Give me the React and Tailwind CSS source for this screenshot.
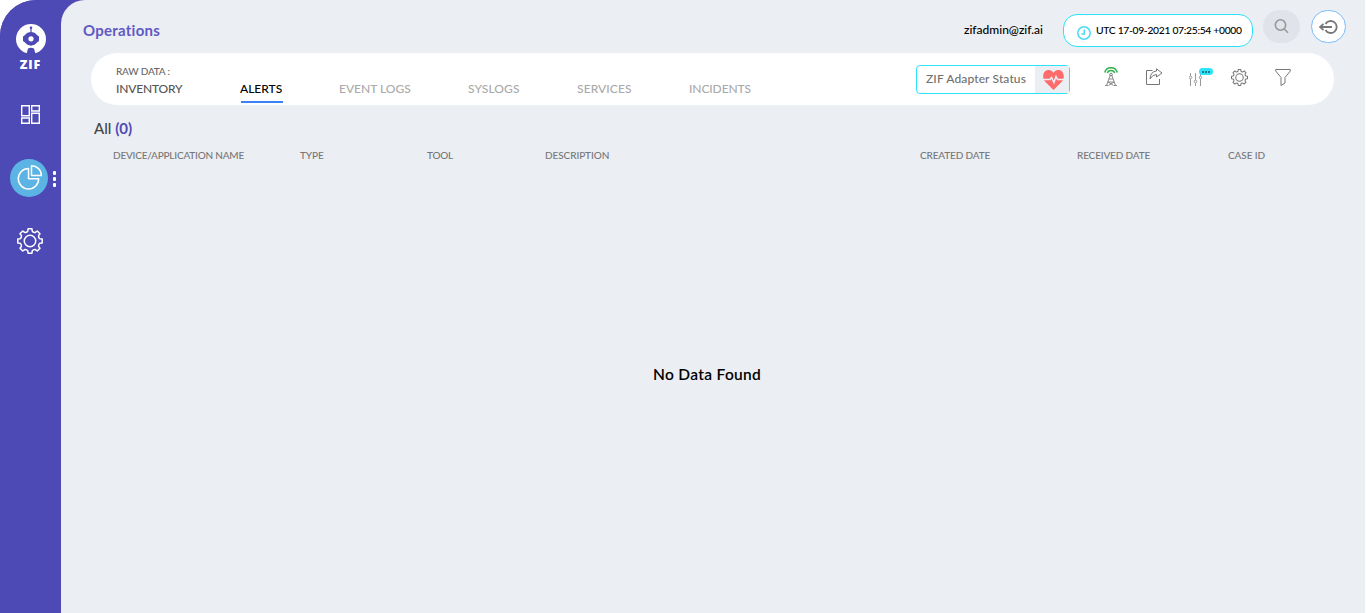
const C = ({ children, className = "", ...p }) => (
  <svg fill="none" stroke="currentColor" className={`block shrink-0 ${className}`} {...p}>{children}</svg>
);

// Eight-toothed outline: each tooth is a flat crown joined to the next by a shallow curved notch.
const polar = (r, deg) => {
  const a = (deg * Math.PI) / 180;
  return `${(12 + r * Math.sin(a)).toFixed(2)} ${(12 - r * Math.cos(a)).toFixed(2)}`;
};
const gear = Array.from({ length: 8 }, (_, i) => {
  const d = i * 45;
  return `${i ? "L" : "M"}${polar(9.3, d - 13)}L${polar(11.4, d - 9)}L${polar(11.4, d + 9)}L${polar(9.3, d + 13)}Q${polar(8.3, d + 22.5)} ${polar(9.3, d + 32)}`;
}).join("") + "z";

const Gear = (p) => (
  <C viewBox="0 0 24 24" strokeLinejoin="round" {...p}>
    <path d={gear} />
    <circle cx="12" cy="12" r="5.300" />
  </C>
);

function Sidebar() {
  return (
    <aside className="flex h-full w-[61px] shrink-0 flex-col items-center bg-[#4e4ab5] pr-[2px] text-white">
      <C className="mt-6 ml-[2px] h-[30px] w-[30px]" viewBox="0 0 30 30" stroke="none">
        <circle cx="15" cy="15" r="15" fill="#fff" />
        <path d="M10.500 30l1.500-5.500q3-1.500 6 0l1.500 5.500z" fill="#4e4ab5" />
        <path d="M9 11a7.500 7.500 0 0 1 12 0l2 1.500v4.500l-2 1.500a7.500 7.500 0 0 1-12 0l-2-1.500v-4.500z" fill="#4e4ab5" />
        <path d="M15 4v4M15 19v2.500" stroke="#4e4ab5" strokeWidth="1.200" />
        <circle cx="15" cy="3.800" r="1.300" fill="#4e4ab5" />
        <circle cx="15" cy="14.800" r="2.600" fill="#fff" />
      </C>
      <span className="mt-1 ml-[2px] font-['Open_Sans',sans-serif] text-[12.500px] leading-[14px] font-extrabold tracking-[1px]">ZIF</span>
      <C className="mt-[33px] ml-[2px] h-[19px] w-[19px]" viewBox="0 0 19 19" strokeWidth="1.400">
        <path d="M.7.7h7.600v10H.7zM10.700.7h7.600v5.300h-7.600zM.7 13h7.600v5.300H.7zM10.700 8.300h7.600v10h-7.600z" />
      </C>
      <div className="relative mt-[35px] mr-px flex h-[38px] w-[38px] items-center justify-center rounded-full bg-[#5cb4e5]">
        <C className="-mt-[2px] h-[25px] w-[25px]" viewBox="0 0 25 25" strokeWidth="1.500" strokeLinejoin="round">
          <path d="M11.500 3.500A10.200 10.200 0 1 0 21.700 13.700H11.500z" />
          <path d="M14.500.8v9.800h10A9.900 9.900 0 0 0 14.500.8z" />
        </C>
        <div className="absolute top-[12px] left-[43px] flex flex-col gap-[2px]">
          <i className="h-1 w-[3px] rounded-[1px] bg-white" />
          <i className="h-1 w-[3px] rounded-[1px] bg-white" />
          <i className="h-1 w-[3px] rounded-[1px] bg-white" />
        </div>
      </div>
      <Gear className="mt-[31px] ml-px h-[26px] w-[26px]" strokeWidth="1.400" />
    </aside>
  );
}

function Header() {
  return (
    <header className="flex h-[53px] items-start">
      <h1 className="mt-[20px] ml-[22px] w-[881px] text-[15px] leading-5 font-bold tracking-[0.25px] text-[#6159c4]">Operations</h1>
      <span className="mt-[22px] w-[99px] text-[12px] leading-4 font-medium whitespace-nowrap text-black">zifadmin@zif.ai</span>
      <div className="mt-[14px] flex h-[33px] w-[190px] items-center rounded-[14px] border border-[#2be3fb] bg-white pl-[13px]">
        <C className="mt-1 h-[14px] w-[14px] text-[#4bd9f5]" viewBox="0 0 14 14" strokeWidth="1.500">
          <circle cx="7" cy="7" r="6.200" />
          <path d="M7.300 3.500V8H4.500" />
        </C>
        <span className="-mt-px ml-[5px] text-[10.300px] leading-4 font-medium tracking-[-0.3px] whitespace-nowrap text-black">UTC 17-09-2021 07:25:54 +0000</span>
      </div>
      <div className="mt-[10px] ml-[10px] flex h-[33px] w-[37px] items-center justify-center rounded-full bg-[#e0e3ea] text-[#999]">
        <C className="h-[15px] w-[15px]" viewBox="0 0 15 15" strokeWidth="1.600">
          <circle cx="6.500" cy="6" r="5.200" />
          <path d="M10.300 10l3.700 3.700" />
        </C>
      </div>
      <div className="mt-[10px] ml-[11px] flex h-[33px] w-[35px] items-center justify-center rounded-full border border-[#7bbcf9] bg-white text-[#777]">
        <C className="h-[14px] w-[19px]" viewBox="0 0 19 14" strokeWidth="1.800">
          <path d="M6.500 4a6 6 0 1 1 0 6M13 7H1M4.500 3.800L1 7l3.500 3.200" />
        </C>
      </div>
    </header>
  );
}

function Toolbar() {
  return (
    <nav className="ml-[30px] flex h-[52px] w-[1243px] rounded-[26px] bg-white pl-[25px] text-[12px] font-medium text-[#aaa]">
      <div className="w-[124px] pt-[11px] text-[#555]">
        <div className="text-[10px] leading-[14px] tracking-[-0.2px] text-[#666]">RAW DATA :</div>
        <div className="mt-[3px] leading-4 tracking-[-0.18px]">INVENTORY</div>
      </div>
      <div className="w-[99px] pt-7 text-black">
        <div className="leading-4">ALERTS</div>
        <div className="mt-1 ml-px h-[2px] w-[42px] bg-[#3b82f6]" />
      </div>
      <div className="w-[129px] pt-7 leading-4">EVENT LOGS</div>
      <div className="w-[109px] pt-7 leading-4 tracking-[0.1px]">SYSLOGS</div>
      <div className="w-[112px] pt-7 leading-4 tracking-[0.1px]">SERVICES</div>
      <div className="w-[227px] pt-7 leading-4 tracking-[-0.1px]">INCIDENTS</div>
      <div className="mt-3 flex h-[29px] w-[154px] items-center justify-between rounded-[4px] border border-[#2be3fb] pl-[9px] text-[#707070]">
        <span className="-mt-[2px] tracking-[0.12px] whitespace-nowrap">ZIF Adapter Status</span>
        <div className="flex h-[27px] w-[34px] items-center justify-center bg-[#ebeef3] pl-[2px]">
          <C className="h-5 w-[21px]" viewBox="0 0 21 20" stroke="none">
            <path fill="#ff6b6b" d="M10.500 20L2 11.500C-1 8-.5 1 5 0c2.500-.2 4.500 1 5.500 3 1-2 3-3.200 5.500-3 5.500 1 6 8 3 11.500z" />
            <path d="M0 9.500h7l1.500-2 2.500 5L13 6.500l1.500 3H21" stroke="#ebeef3" strokeWidth="1.500" />
          </C>
        </div>
      </div>
      <C className="mt-[14px] ml-[34px] h-5 w-[14px]" viewBox="0 0 14 20">
        <path d="M.7 5.500Q2 .8 7 .8t6.300 4.700M3.300 6Q4 3.500 7 3.500T10.700 6" stroke="#2eb04b" strokeWidth="1.500" />
        <path d="M6.300 8L2.500 18.500M7.700 8l3.800 10.500M5 12h4M4 15h6M4 15l5.500 3.500M10 15l-5.500 3.500M1 18.500h3M10 18.500h3" stroke="#888" />
        <circle cx="7" cy="7.500" r="1.300" stroke="#777" />
      </C>
      <C className="mt-[15px] ml-[28px] h-[17px] w-[17px] text-[#777]" viewBox="0 0 17 17">
        <path d="M6.500 2.500h-6v14h13V11M10.500.8L16 5l-5.500 4V6.500Q6.500 6.500 4 11q.5-7.500 6.500-8z" />
      </C>
      <div className="relative mt-[20px] ml-[26px] h-[13px] w-[14px]">
        <C className="h-[13px] w-[14px] text-[#999]" viewBox="0 0 14 13">
          <path d="M1.500 0v3M1.500 6v7M6.500 0v7M6.500 10v3M11.500 0v3M11.500 6v7" />
          <circle cx="1.500" cy="4.500" r="1.300" /><circle cx="6.500" cy="8.500" r="1.300" /><circle cx="11.500" cy="4.500" r="1.300" />
        </C>
        <div className="absolute -top-[5px] left-[10px] flex h-[7px] w-[14px] items-center justify-center gap-px rounded-full bg-[#2be3fb]">
          <i className="h-[2px] w-[2px] bg-[#277b88]" /><i className="h-[2px] w-[2px] bg-[#277b88]" /><i className="h-[2px] w-[2px] bg-[#277b88]" />
        </div>
      </div>
      <Gear className="mt-[16px] ml-[28px] h-[17px] w-[17px] text-[#777]" strokeWidth="1.500" />
      <C className="mt-[16px] ml-[27px] h-[17px] w-4 text-[#777]" viewBox="0 0 16 17">
        <path d="M.7.5h14.600v1.500L10 8.500v5.500l-4 2.500v-8L.7 2z" />
      </C>
    </nav>
  );
}

export default function App() {
  return (
    <div className="h-[613px] w-[1366px] bg-white font-['Lato',sans-serif]">
      <div className="flex h-full w-[1365px] overflow-hidden rounded-tl-[36px] bg-[#4e4ab5]">
        <Sidebar />
        <main className="h-full w-[1304px] rounded-tl-[24px] bg-[#ebeef3]">
          <Header />
          <Toolbar />
          <h2 className="mt-[13px] ml-[33px] text-[15px] leading-5 font-medium text-[#444]">All <span className="font-bold text-[#4e4ab5]">(0)</span></h2>
          <div className="mt-[10px] ml-[52px] grid grid-cols-[187px_127px_118px_375px_157px_151px_60px] text-[10px] leading-[14px] font-medium tracking-[-0.08px] text-[#777]">
            <span className="tracking-[-0.2px]">DEVICE/APPLICATION NAME</span><span>TYPE</span><span className="tracking-[-0.2px]">TOOL</span><span>DESCRIPTION</span><span className="tracking-[-0.15px]">CREATED DATE</span><span className="tracking-[-0.15px]">RECEIVED DATE</span><span>CASE ID</span>
          </div>
          <p className="mt-[202px] ml-[592px] text-[15.500px] leading-5 font-semibold tracking-[0.32px] text-black">No Data Found</p>
        </main>
      </div>
    </div>
  );
}
